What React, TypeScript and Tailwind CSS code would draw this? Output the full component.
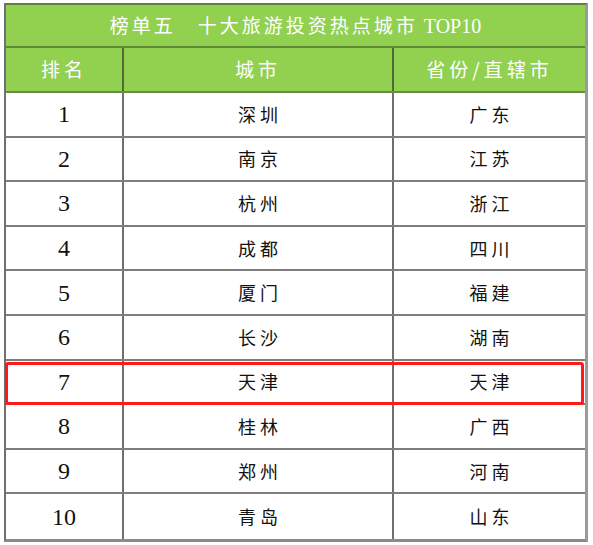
import React from "react";

const rows = [
  ["1", "深圳", "广东"],
  ["2", "南京", "江苏"],
  ["3", "杭州", "浙江"],
  ["4", "成都", "四川"],
  ["5", "厦门", "福建"],
  ["6", "长沙", "湖南"],
  ["7", "天津", "天津"],
  ["8", "桂林", "广西"],
  ["9", "郑州", "河南"],
  ["10", "青岛", "山东"],
];

const serif = "font-['Liberation_Serif','Noto_Sans_CJK_SC',serif]";
const cjk = "font-['Noto_Sans_CJK_SC',sans-serif]";

export default function App() {
  return (
    <div className="relative w-[593px] h-[545px] bg-white pl-[4px] pt-[3px]">
      <div className="w-[584px] border-l-2 border-t-2 border-r-[3px] border-b-[3px] border-l-[#707070] border-t-[#5f7f3a] border-r-[#9a9a9a] border-b-[#8a8a8a]">
        {/* title */}
        <div
          className={`h-[43px] bg-[#92d050] border-b-2 border-[#5f8a35] flex items-center justify-center text-white text-[19px] tracking-[3px] ${serif}`}
        >
          <span className={cjk}>榜单五　十大旅游投资热点城市</span>
          <span className="ml-[6px] tracking-normal text-[20px]">TOP10</span>
        </div>
        {/* header */}
        <div
          className={`h-[45px] bg-[#92d050] border-b-2 border-[#6a8a45] flex text-white text-[19px] tracking-[4px] ${cjk}`}
        >
          <div className="w-[118px] border-r-2 border-[#4f6a33] flex items-center justify-center">
            排名
          </div>
          <div className="w-[270px] border-r-2 border-[#4f6a33] flex items-center justify-center">
            城市
          </div>
          <div className="flex-1 flex items-center justify-center">省份/直辖市</div>
        </div>
        {rows.map(([n, city, prov], i) => (
          <div
            key={n}
            className={`h-[44.6px] flex text-[#111] ${
              i < rows.length - 1 ? "border-b-2 border-[#7d7d7d]" : ""
            }`}
          >
            <div
              className={`w-[118px] border-r-2 border-[#6f6f6f] flex items-center justify-center text-[24px] ${serif}`}
            >
              {n}
            </div>
            <div
              className={`w-[270px] border-r-2 border-[#6f6f6f] flex items-center justify-center text-[18px] tracking-[4px] pl-[4px] ${cjk}`}
            >
              {city}
            </div>
            <div
              className={`flex-1 flex items-center justify-center text-[18px] tracking-[4px] pl-[4px] ${cjk}`}
            >
              {prov}
            </div>
          </div>
        ))}
      </div>
      {/* highlight around 天津 */}
      <div className="absolute left-[5px] top-[362px] w-[579px] h-[43px] border-[3px] border-[#ff1a1a] rounded-[3px]" />
    </div>
  );
}
